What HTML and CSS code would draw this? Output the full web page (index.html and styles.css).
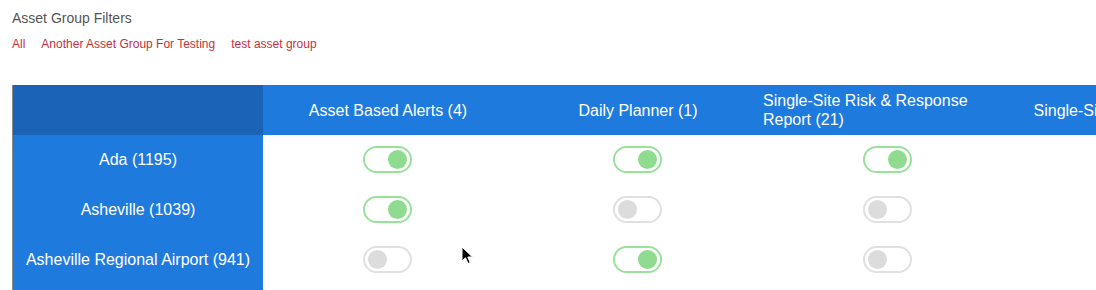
FILE: index.html
```html
<!DOCTYPE html>
<html>
<head>
<meta charset="utf-8">
<link rel="stylesheet" href="styles.css">
</head>
<body>
<div class="page">
  <h2 class="title">Asset Group Filters</h2>
  <div class="filters">
    <a class="filter">All</a>
    <a class="filter">Another Asset Group For Testing</a>
    <a class="filter">test asset group</a>
  </div>
  <div class="grid">
    <div class="corner"></div>
    <div class="colhead"><span>Asset Based Alerts (4)</span></div>
    <div class="colhead"><span>Daily Planner (1)</span></div>
    <div class="colhead wrap"><span>Single-Site Risk &amp; Response Report (21)</span></div>
    <div class="colhead"><span>Single-Site Daily Planners (3)</span></div>

    <div class="rowhead">Ada (1195)</div>
    <div class="cell"><span class="toggle on"></span></div>
    <div class="cell"><span class="toggle on"></span></div>
    <div class="cell"><span class="toggle on"></span></div>
    <div class="cell"></div>

    <div class="rowhead">Asheville (1039)</div>
    <div class="cell"><span class="toggle on"></span></div>
    <div class="cell"><span class="toggle"></span></div>
    <div class="cell"><span class="toggle"></span></div>
    <div class="cell"></div>

    <div class="rowhead">Asheville Regional Airport (941)</div>
    <div class="cell"><span class="toggle"></span></div>
    <div class="cell"><span class="toggle on"></span></div>
    <div class="cell"><span class="toggle"></span></div>
    <div class="cell"></div>

    <div class="rowhead"></div>
    <div class="cell"></div>
    <div class="cell"></div>
    <div class="cell"></div>
    <div class="cell"></div>
  </div>
</div>
<svg class="cursor" width="14" height="20" viewBox="0 0 14 20">
  <path d="M1 1 L1 15 L4.5 11.8 L7 17.5 L9.2 16.5 L6.8 11 L11.5 11 Z" fill="#000" stroke="#fff" stroke-width="1"/>
</svg>
</body>
</html>
```

FILE: styles.css
```css
html, body {
  margin: 0;
  padding: 0;
  background: #fff;
  overflow: hidden;
}
body {
  width: 1096px;
  height: 290px;
  position: relative;
  font-family: "Liberation Sans", Arial, Helvetica, sans-serif;
}
.page {
  padding: 10px 0 0 12px;
}
.title {
  margin: 0;
  font-size: 14px;
  font-weight: normal;
  color: #555;
  line-height: 16px;
}
.filters {
  display: flex;
  gap: 16px;
  margin-top: 11px;
  line-height: 14px;
}
.filter {
  font-size: 12px;
  color: #c4313c;
}
.grid {
  margin-top: 34px;
  display: grid;
  grid-template-columns: repeat(5, 250px);
  grid-auto-rows: 50px;
  width: 1250px;
  border-left: 1px solid #8a8a8a;
}
.corner {
  background: #1a63b7;
}
.colhead {
  background: #1f7ade;
  color: #fff;
  font-size: 16px;
  line-height: 19px;
  display: flex;
  align-items: center;
  justify-content: center;
}
.colhead span {
  white-space: nowrap;
}
.colhead.wrap {
  justify-content: flex-start;
}
.colhead.wrap span {
  white-space: normal;
  max-width: 215px;
}
.rowhead {
  background: #1f7ade;
  color: #fff;
  font-size: 16px;
  display: flex;
  align-items: center;
  justify-content: center;
}
.cell {
  background: #fff;
  display: flex;
  align-items: center;
  justify-content: center;
}
.toggle {
  box-sizing: border-box;
  width: 49px;
  height: 27px;
  margin-left: -2px;
  margin-top: -2px;
  border-radius: 14px;
  border: 2px solid #e0e0e0;
  background: #fff;
  display: flex;
  align-items: center;
  padding: 0 3px;
}
.toggle::after {
  content: "";
  width: 19px;
  height: 19px;
  border-radius: 50%;
  background: #dcdcdc;
}
.toggle.on {
  border-color: #98e29a;
  justify-content: flex-end;
}
.toggle.on::after {
  background: #8fdc90;
}
.cursor {
  position: absolute;
  left: 461px;
  top: 246px;
}
```
